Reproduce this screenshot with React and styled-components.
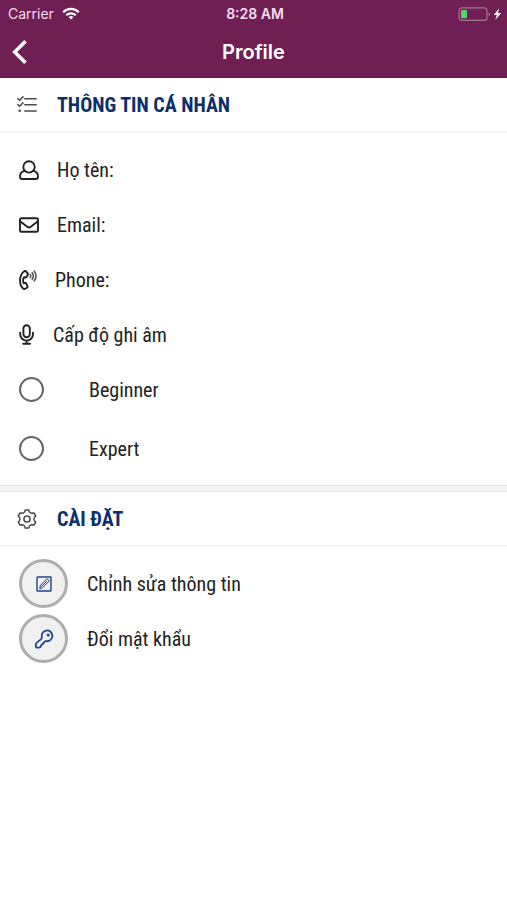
import React, { useState } from 'react'
import styled, { createGlobalStyle } from 'styled-components'

const colors = {
    brand: '#701f54',
    brandDark: '#621946',
    title: '#0b2f68',
    text: '#222222',
    line: '#f4f4f4',
    lineDark: '#e6e6e6',
    ring: '#adadad',
}

const GlobalStyle = createGlobalStyle`
    * {
        box-sizing: border-box;
    }
    body {
        margin: 0;
        background-color: #ffffff;
        color: ${colors.text};
        font-family: 'Roboto Condensed', 'Liberation Sans Narrow', Roboto, sans-serif;
        font-size: 20px;
        line-height: 24px;
    }
`

const Header = styled.header`
    background-color: ${colors.brand};
    border-bottom: 1px solid ${colors.brandDark};
    color: #ffffff;
    font-family: Inter, sans-serif;
`

const HeaderRow = styled.div`
    display: grid;
    grid-template-columns: 1fr auto 1fr;
    align-items: center;
    height: ${props => props.height};
    padding: ${props => props.padding};
`

const StatusText = styled.span`
    display: flex;
    align-items: center;
    gap: 8px;
    color: #f3dfec;
    font-size: 14px;
    line-height: 20px;
    font-weight: ${props => props.weight || 400};
`

const Battery = styled.span`
    display: flex;
    justify-self: end;
`

const BackButton = styled.button`
    display: flex;
    justify-self: start;
    padding: 0;
    border: none;
    background: none;
    color: #ffffff;
    cursor: pointer;
`

const PageTitle = styled.h1`
    margin: 0;
    font-size: 20px;
    line-height: 24px;
    font-weight: 600;
`

const Divider = styled.hr`
    height: 7px;
    margin: 0;
    border: 1px solid ${colors.lineDark};
    border-width: 1px 0;
    background-color: ${colors.line};
`

const SectionHead = styled.div`
    display: flex;
    align-items: center;
    gap: 20px;
    height: 55px;
    padding: 0 17px;
    border-bottom: 2px solid ${colors.line};
    color: #4a4a4a;
`

const SectionTitle = styled.h2`
    margin: 0;
    color: ${colors.title};
    font-size: 20px;
    line-height: 24px;
    font-weight: 700;
`

const SectionBody = styled.div`
    padding: 9px 19px;
`

const List = styled.ul`
    margin: 0;
    padding: 0;
    list-style: none;
`

const Row = styled.li`
    display: flex;
    align-items: center;
    gap: ${props => props.gap || '18px'};
    height: 55px;
`

const RadioGroup = styled.div`
    display: flex;
    flex-direction: column;
    gap: 4px;
`

const RadioLabel = styled.label`
    display: flex;
    align-items: center;
    gap: 45px;
    height: 55px;
`

const Radio = styled.input`
    appearance: none;
    width: 25px;
    height: 25px;
    margin: 0;
    border: 2px solid #666666;
    border-radius: 50%;

    &:checked {
        background: radial-gradient(#666666 50%, transparent 54%);
    }
`

const RoundButton = styled.button`
    display: flex;
    align-items: center;
    justify-content: center;
    width: 49px;
    height: 49px;
    padding: 0;
    border: 3px solid ${colors.ring};
    border-radius: 50%;
    background-color: #f0f0f0;
    color: #1d4488;
    cursor: pointer;
`

const ActionLabel = styled.label`
    cursor: pointer;
`

const Icon = ({ width, height, stroke = 2, children }) => (
    <svg
        width={width}
        height={height}
        viewBox={`0 0 ${width} ${height}`}
        fill="none"
        stroke="currentColor"
        strokeWidth={stroke}
        strokeLinecap="round"
        strokeLinejoin="round"
        aria-hidden="true"
    >
        {children}
    </svg>
)

const WifiIcon = () => (
    <Icon width={18} height={13} stroke={2.2}>
        <g stroke="#ffffff" strokeLinecap="butt">
            <path d="M1.2 5.2a11 11 0 0 1 15.6 0" />
            <path d="M4.2 8.3a6.8 6.8 0 0 1 9.6 0" />
        </g>
        <path d="M9 12.5 6.6 10.1a3.4 3.4 0 0 1 4.8 0Z" fill="#ffffff" stroke="none" />
    </Icon>
)

const BatteryIcon = () => (
    <Icon width={44} height={14} stroke={1.2}>
        <rect x="1" y="0.8" width="28" height="12.6" rx="3" stroke="#a87598" />
        <rect x="3" y="3" width="6" height="8.2" rx="1" fill="#4fd866" stroke="none" />
        <path d="M30.7 5v4.4c1.7-.7 1.7-3.7 0-4.4Z" fill="#a87598" stroke="none" />
        <path d="M41.2 1.2 35.8 8h3.1l-1.7 5 6-7h-3.3Z" fill="#ffffff" stroke="none" />
    </Icon>
)

const BackIcon = () => (
    <Icon width={16} height={26} stroke={3.6}>
        <path d="M13.5 2.2 2.7 13l10.8 10.8" strokeLinecap="butt" strokeLinejoin="miter" />
    </Icon>
)

const ChecklistIcon = () => (
    <Icon width={20} height={18} stroke={1.5}>
        <path d="M.9 2.6 2.6 4.2 6 .9M.9 8.6l1.7 1.6L6 6.9M7.8 2.7h11.4M7.8 8.8h11.4M7.8 15h11.4" />
        <circle cx="2.7" cy="14.8" r="1.3" fill="currentColor" stroke="none" />
    </Icon>
)

// six rounded teeth around the centre, the first one pointing up
const gearPath = () => {
    const at = (radius, degrees) => {
        const angle = ((degrees - 90) * Math.PI) / 180
        return `${(10 + radius * Math.cos(angle)).toFixed(2)} ${(10 + radius * Math.sin(angle)).toFixed(2)}`
    }
    const teeth = [0, 60, 120, 180, 240, 300].map(
        a => `${at(9.2, a - 11)}L${at(9.2, a + 11)}L${at(7.5, a + 19)}Q${at(6.5, a + 30)} ${at(7.5, a + 41)}`
    )
    return `M${teeth.join('L')}Z`
}

const GearIcon = () => (
    <Icon width={20} height={20} stroke={1.5}>
        <path d={gearPath()} />
        <circle cx="10" cy="10" r="3.1" />
    </Icon>
)

const UserIcon = () => (
    <Icon width={20} height={20} stroke={1.9}>
        <circle cx="10" cy="6.9" r="5.7" />
        <path d="M5.4 10.8C2.6 11.5 1 13.6 1 16.4 1 18.2 2 19 3.4 19h13.2c1.4 0 2.4-.8 2.4-2.6 0-2.8-1.6-4.9-4.4-5.6" />
    </Icon>
)

const MailIcon = () => (
    <Icon width={20} height={16} stroke={1.9}>
        <rect x="1" y="1.2" width="18" height="13.6" rx="1.4" />
        <path d="M1.4 4.6 8.2 9.8c1.2.9 2.4.9 3.6 0l6.8-5.2" />
    </Icon>
)

const PhoneIcon = () => (
    <Icon width={18} height={20} stroke={1.9}>
        <path d="M5.2 1.2C.2 4.7-.4 14.5 4.2 18.6c.6.6 1.3.6 2 .2l2-1.3c.4-.3.5-.7.3-1.2l-1.2-2.7c-.2-.5-.6-.7-1.1-.6l-1.4.3c-1-2.1-.9-4.2.2-6.2l1.3.4c.5.1.9 0 1.2-.5l1.4-2.5c.2-.5.1-.9-.3-1.2L6.8 1.1c-.6-.4-1.1-.3-1.6.1Z" />
        <path d="M11.2 4.4c.7 1 .7 2.2 0 3.2M13.2 2.7c1.4 2 1.4 4.6 0 6.6M15.3 1.2c2.1 2.9 2.1 6.7 0 9.6" stroke="#555555" strokeWidth="1.6" />
    </Icon>
)

const MicIcon = () => (
    <Icon width={16} height={21} stroke={1.9}>
        <rect x="4.4" y="1.2" width="6.4" height="12" rx="3.2" />
        <path d="M1.2 8.6v1.6a6.4 6.4 0 0 0 12.8 0V8.6M7.6 16.6v3M4.2 19.8h6.8" />
    </Icon>
)

const EditIcon = () => (
    <Icon width={16} height={16} stroke={1.4}>
        <rect x="1" y="1" width="14" height="14" rx="0.6" />
        <path d="m3.8 12.2.7-3 6.5-6.5 2.3 2.3-6.5 6.5ZM5.6 10.4l5-5" strokeWidth="1" />
    </Icon>
)

const KeyIcon = () => (
    <Icon width={20} height={20} stroke={1.8}>
        <path d="M7.9 8.6A5.4 5.4 0 1 1 12.2 12.2C10.8 12 10.2 13 9.6 14 8.8 15.4 8 15.2 7.4 16 6.8 17 6.6 18.6 5 18.6H3.2C2.2 18.6 1.8 18.2 1.8 17.2V15.6C1.8 14.6 2.2 14.2 3 13.4L6.8 10.4C7.4 9.9 7.8 9.4 7.9 8.6Z" />
        <circle cx="14.2" cy="6" r="1.6" fill="currentColor" stroke="none" />
    </Icon>
)

const fields = [
    { label: 'Họ tên:', icon: <UserIcon /> },
    { label: 'Email:', icon: <MailIcon /> },
    { label: 'Phone:', icon: <PhoneIcon /> },
    { label: 'Cấp độ ghi âm', icon: <MicIcon /> },
]

const levels = ['Beginner', 'Expert']

const actions = [
    { id: 'edit', label: 'Chỉnh sửa thông tin', icon: <EditIcon /> },
    { id: 'password', label: 'Đổi mật khẩu', icon: <KeyIcon /> },
]

export default () => {
    const [level, setLevel] = useState('')

    return (
        <>
            <GlobalStyle />
            <Header>
                <HeaderRow height="27px" padding="0 5px 0 8px">
                    <StatusText>
                        Carrier
                        <WifiIcon />
                    </StatusText>
                    <StatusText weight={600}>8:28 AM</StatusText>
                    <Battery>
                        <BatteryIcon />
                    </Battery>
                </HeaderRow>
                <HeaderRow height="50px" padding="0 12px">
                    <BackButton type="button" aria-label="Back">
                        <BackIcon />
                    </BackButton>
                    <PageTitle>Profile</PageTitle>
                </HeaderRow>
            </Header>
            <main>
                <section>
                    <SectionHead>
                        <ChecklistIcon />
                        <SectionTitle>THÔNG TIN CÁ NHÂN</SectionTitle>
                    </SectionHead>
                    <SectionBody>
                        <List>
                            {fields.map(({ label, icon }) => (
                                <Row key={label}>
                                    {icon}
                                    <span>{label}</span>
                                </Row>
                            ))}
                        </List>
                        <RadioGroup role="radiogroup" aria-label="Cấp độ ghi âm">
                            {levels.map(name => (
                                <RadioLabel key={name}>
                                    <Radio
                                        type="radio"
                                        name="level"
                                        value={name}
                                        checked={level === name}
                                        onChange={() => setLevel(name)}
                                    />
                                    {name}
                                </RadioLabel>
                            ))}
                        </RadioGroup>
                    </SectionBody>
                </section>
                <Divider />
                <section>
                    <SectionHead>
                        <GearIcon />
                        <SectionTitle>CÀI ĐẶT</SectionTitle>
                    </SectionHead>
                    <SectionBody>
                        <List>
                            {actions.map(({ id, label, icon }) => (
                                <Row key={id} gap="19px">
                                    <RoundButton type="button" id={id}>
                                        {icon}
                                    </RoundButton>
                                    <ActionLabel htmlFor={id}>{label}</ActionLabel>
                                </Row>
                            ))}
                        </List>
                    </SectionBody>
                </section>
            </main>
        </>
    )
}
